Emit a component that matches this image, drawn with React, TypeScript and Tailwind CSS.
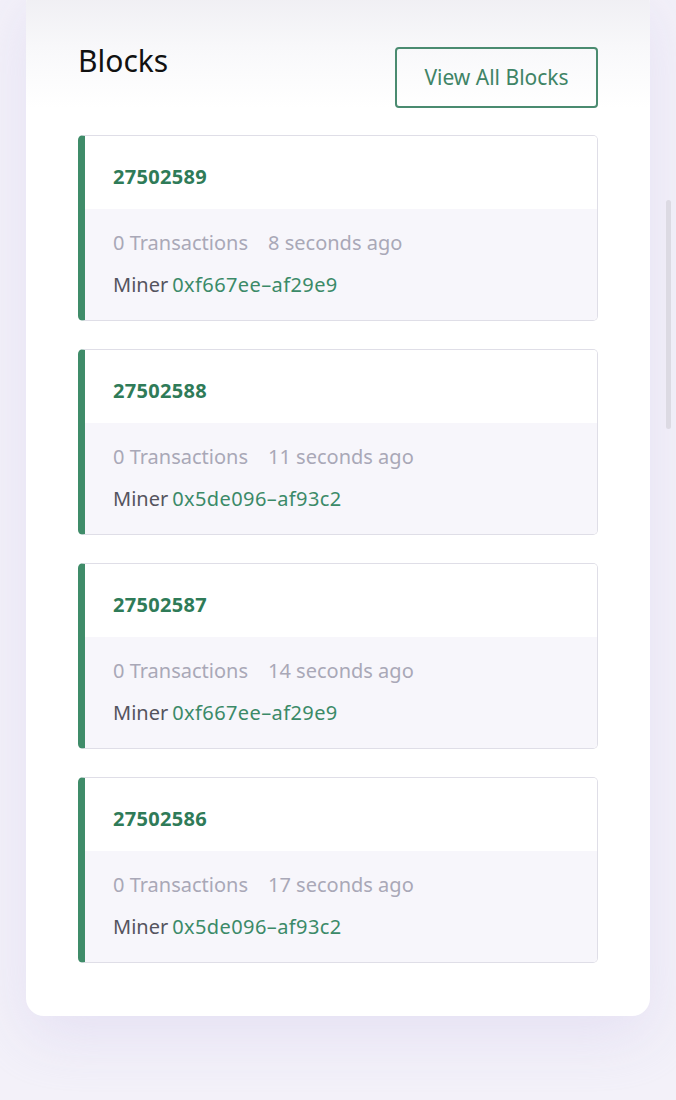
import React from "react";

const blocks = [
  { n: "27502589", t: "8 seconds ago", m: "0xf667ee–af29e9" },
  { n: "27502588", t: "11 seconds ago", m: "0x5de096–af93c2" },
  { n: "27502587", t: "14 seconds ago", m: "0xf667ee–af29e9" },
  { n: "27502586", t: "17 seconds ago", m: "0x5de096–af93c2" },
];

function BlockCard({ n, t, m }: { n: string; t: string; m: string }) {
  return (
    <div className="flex flex-col overflow-hidden rounded-[5px] border-[1.5px] border-l-[7px] border-[#dfdee7] border-l-[#3f8c69]">
      <div className="flex h-[73px] items-center bg-white pl-[28px] pt-[8px]">
        <span className="text-[20px] font-bold tracking-[0.3px] text-[#2f7b58]">{n}</span>
      </div>
      <div className="flex flex-col bg-[#f7f6fb] pl-[28px] pt-[21px] pb-[22px]">
        <div className="flex h-[26px] items-center gap-[20px] text-[20px] text-[#a9a8b7]">
          <span>0 Transactions</span>
          <span>{t}</span>
        </div>
        <div className="mt-[16px] flex h-[26px] items-center text-[20px]">
          <span className="text-[#55545e]">Miner</span>
          <span className="ml-[4px] tracking-[0.4px] text-[#3b8a68]">{m}</span>
        </div>
      </div>
    </div>
  );
}

export default function App() {
  return (
    <div
      className="relative min-h-[1100px] overflow-hidden bg-[#f3f1f9]"
      style={{ fontFamily: '"Noto Sans", "Open Sans", sans-serif' }}
    >
      <div className="mx-[26px] -mt-[14px] w-[624px] overflow-hidden rounded-[18px] bg-white shadow-[0_20px_60px_rgba(220,214,240,0.6)]">
        <div className="bg-gradient-to-b from-[#eeedf2] via-[#f8f8fa] to-white px-[52px] pt-[61px]">
          <div className="flex items-start justify-between">
            <h2 className="mt-[-5px] text-[30px] font-normal leading-[38px] text-[#111]">
              Blocks
            </h2>
            <button className="flex h-[61px] w-[203px] items-center justify-center rounded-[4px] border-2 border-[#4a8b70] text-[21px] text-[#3f8466]">
              View All Blocks
            </button>
          </div>
        </div>
        <div className="flex flex-col gap-[28px] px-[52px] pt-[27px] pb-[53px]">
          {blocks.map((b) => (
            <BlockCard key={b.n} {...b} />
          ))}
        </div>
      </div>
      <div className="absolute right-[5px] top-[200px] h-[229px] w-[5px] rounded-full bg-[#dcdae3]" />
    </div>
  );
}
